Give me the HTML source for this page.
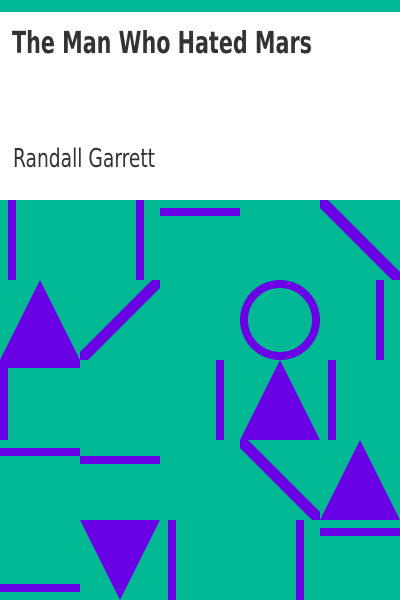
<!DOCTYPE html>
<html><head><meta charset="utf-8"><style>
html,body{margin:0;padding:0;width:400px;height:600px;overflow:hidden;background:#fff}
svg{display:block}
</style></head><body>
<svg width="400" height="600" viewBox="0 0 400 600" xmlns="http://www.w3.org/2000/svg">
<rect x="0" y="0" width="400" height="12" fill="#00B994"/>
<rect x="0" y="12" width="400" height="188" fill="#fff"/>
<text x="12" y="53" font-family="DejaVu Sans Condensed, DejaVu Sans, Liberation Sans, sans-serif" font-weight="bold" font-stretch="condensed" font-size="30" fill="#333" textLength="300" lengthAdjust="spacingAndGlyphs">The Man Who Hated Mars</text>
<text x="13" y="167" font-family="DejaVu Sans Condensed, DejaVu Sans, Liberation Sans, sans-serif" font-stretch="condensed" font-size="26" fill="#333" textLength="142" lengthAdjust="spacingAndGlyphs">Randall Garrett</text>
<rect x="0" y="200" width="400" height="400" fill="#00B994"/>
<g fill="#6A00E6">
<rect x="8" y="200" width="8" height="80"/>
<rect x="136" y="200" width="8" height="80"/>
<rect x="160" y="208" width="80" height="8"/>
<polygon points="320,200 328,200 400,272 400,280 392,280 320,208"/>
<polygon points="0,360 40,280 80,360"/>
<rect x="0" y="360" width="80" height="8"/>
<rect x="0" y="360" width="8" height="80"/>
<polygon points="80,352 152,280 160,280 160,288 88,360 80,360"/>
<rect x="376" y="280" width="8" height="80"/>
<rect x="216" y="360" width="8" height="80"/>
<rect x="328" y="360" width="8" height="80"/>
<polygon points="240,440 280,360 320,440"/>
<rect x="0" y="448" width="80" height="8"/>
<rect x="80" y="456" width="80" height="8"/>
<polygon points="240,440 248,440 320,512 320,520 312,520 240,448"/>
<polygon points="320,520 360,440 400,520"/>
<rect x="320" y="528" width="80" height="8"/>
<polygon points="80,520 160,520 120,600"/>
<rect x="168" y="520" width="8" height="80"/>
<rect x="296" y="520" width="8" height="80"/>
<rect x="0" y="584" width="80" height="8"/>
</g>
<circle cx="280" cy="320" r="36" fill="none" stroke="#6A00E6" stroke-width="8"/>
</svg>
</body></html>
